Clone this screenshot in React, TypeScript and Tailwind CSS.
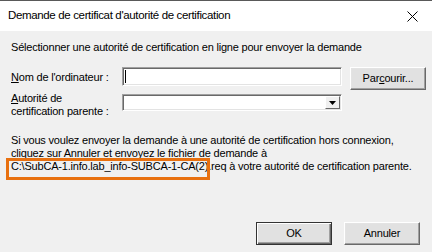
import React from "react";

const font = { fontFamily: '"Liberation Sans", Arial, sans-serif' };

function Sunken({ children, className = "" }: { children?: React.ReactNode; className?: string }) {
  return (
    <div
      className={`relative bg-white border border-t-[#a0a0a0] border-l-[#a0a0a0] border-b-white border-r-white shadow-[inset_1px_1px_0_#696969,inset_-1px_-1px_0_#e3e3e3] ${className}`}
    >
      {children}
    </div>
  );
}

function WinButton({ children, isDefault = false }: { children: React.ReactNode; isDefault?: boolean }) {
  return (
    <button
      className={`w-[76px] h-[23px] bg-[#e1e1e1] text-[11px] text-black flex items-center justify-center ${
        isDefault
          ? "border border-[#333] shadow-[inset_1px_1px_0_#fff,inset_-1px_-1px_0_#696969,inset_-2px_-2px_0_#a0a0a0]"
          : "border border-t-white border-l-white border-b-[#696969] border-r-[#696969] shadow-[inset_-1px_-1px_0_#a0a0a0,inset_1px_1px_0_#e3e3e3]"
      }`}
    >
      {children}
    </button>
  );
}

export default function App() {
  return (
    <div style={font} className="w-[432px] h-[252px] flex flex-col bg-[#f0f0f0] border-t border-[#595959] text-black">
      {/* title bar */}
      <div className="h-[30px] bg-white flex items-center justify-between pl-2 pr-[14px]">
        <span className="text-[11.5px] tracking-[-0.35px]">Demande de certificat d'autorité de certification</span>
        <svg width="11" height="11" viewBox="0 0 11 11">
          <path d="M0.5 0.5 L10.5 10.5 M10.5 0.5 L0.5 10.5" stroke="#000" strokeWidth="1" />
        </svg>
      </div>

      <div className="flex-1 flex flex-col px-[11px] pt-[10px] pb-[7px] text-[11px] leading-[13px] tracking-[-0.2px]">
        <p>Sélectionner une autorité de certification en ligne pour envoyer la demande</p>

        <div className="mt-[13px] grid grid-cols-[103px_220px_77px] gap-x-2 gap-y-[5px] items-start">
          <label className="pt-[4px] whitespace-nowrap">
            <span className="underline">N</span>om de l'ordinateur :
          </label>
          <Sunken className="h-[19px]">
            <div className="absolute left-[2px] top-[2px] w-px h-[13px] bg-black" />
          </Sunken>
          <WinButton>
            Par<span className="underline">c</span>ourir...
          </WinButton>

          <label className="-mt-[3px] whitespace-nowrap">
            <span className="underline">A</span>utorité de
            <br />
            certification parente :
          </label>
          <Sunken className="h-[17px] -mt-[1px]">
            <div className="absolute right-[1px] top-[1px] bottom-[1px] w-[15px] bg-[#f0f0f0] border border-t-white border-l-white border-b-[#696969] border-r-[#696969] flex items-center justify-center">
              <svg width="7" height="4" viewBox="0 0 7 4">
                <path d="M0 0 H7 L3.5 4 Z" fill="#000" />
              </svg>
            </div>
          </Sunken>
          <div />
        </div>

        <p className="mt-[16px] whitespace-nowrap">
          Si vous voulez envoyer la demande à une autorité de certification hors connexion,
          <br />
          cliquez sur Annuler et envoyez le fichier de demande à
          <br />
          <span className="relative">
            C:\SubCA-1.info.lab_info-SUBCA-1-CA(2)
            <span className="absolute -left-[5px] -right-[2px] -top-[2px] -bottom-[8px] border-[3px] border-[#e8700f]" />
          </span>
          .req à votre autorité de certification parente.
        </p>

        <div className="mt-auto flex justify-end gap-[12px] pr-[1px]">
          <WinButton isDefault>OK</WinButton>
          <WinButton>Annuler</WinButton>
        </div>
      </div>
    </div>
  );
}
